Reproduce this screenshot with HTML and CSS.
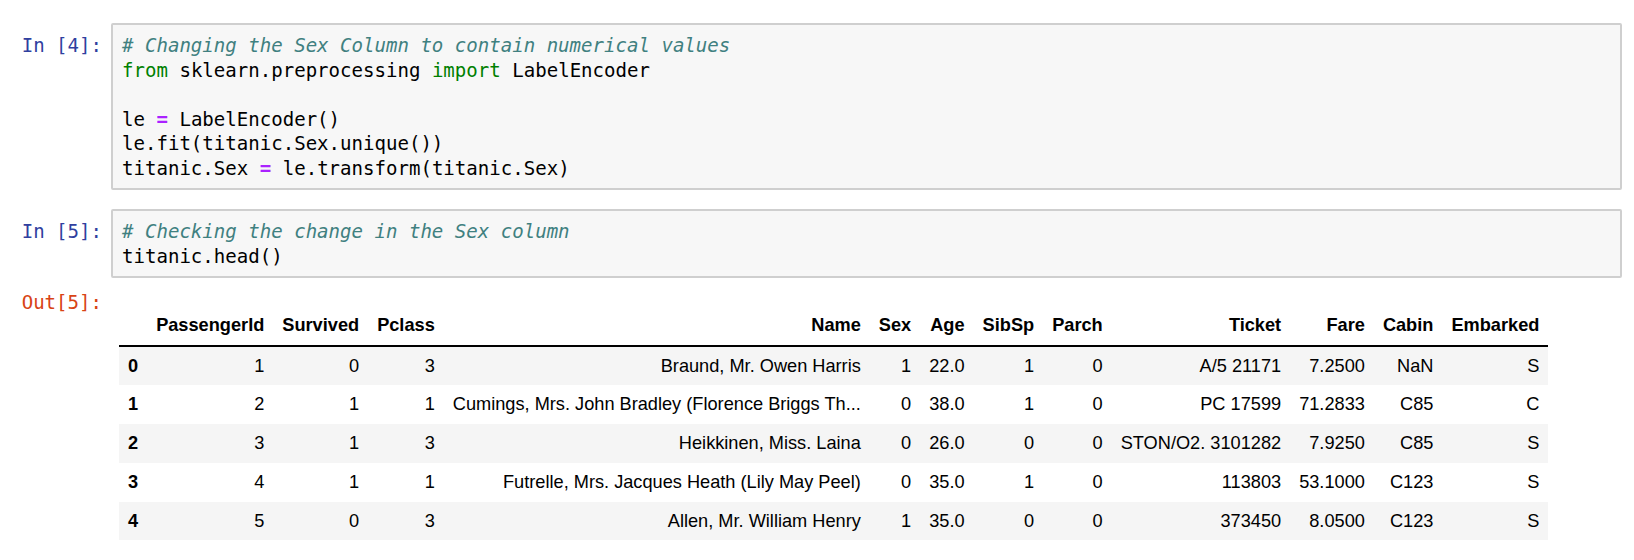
FILE: index.html
```html
<!DOCTYPE html>
<html>
<head>
<meta charset="utf-8">
<link rel="stylesheet" href="styles.css">
</head>
<body>
<div class="notebook">
  <div class="cell">
    <div class="prompt in">In&nbsp;[4]:</div>
    <div class="input-area"><pre class="code"><span class="c"># Changing the Sex Column to contain numerical values</span>
<span class="k">from</span> sklearn.preprocessing <span class="k">import</span> LabelEncoder

le <span class="o">=</span> LabelEncoder()
le.fit(titanic.Sex.unique())
titanic.Sex <span class="o">=</span> le.transform(titanic.Sex)</pre></div>
  </div>
  <div class="cell cell-2">
    <div class="prompt in">In&nbsp;[5]:</div>
    <div class="input-area"><pre class="code"><span class="c"># Checking the change in the Sex column</span>
titanic.head()</pre></div>
  </div>
  <div class="output">
    <div class="prompt out">Out[5]:</div>
    <div class="output-area">
      <table class="dataframe">
        <thead>
          <tr>
            <th></th>
            <th>PassengerId</th>
            <th>Survived</th>
            <th>Pclass</th>
            <th>Name</th>
            <th>Sex</th>
            <th>Age</th>
            <th>SibSp</th>
            <th>Parch</th>
            <th>Ticket</th>
            <th>Fare</th>
            <th>Cabin</th>
            <th>Embarked</th>
          </tr>
        </thead>
        <tbody>
          <tr>
            <th>0</th><td>1</td><td>0</td><td>3</td><td>Braund, Mr. Owen Harris</td><td>1</td><td>22.0</td><td>1</td><td>0</td><td>A/5 21171</td><td>7.2500</td><td>NaN</td><td>S</td>
          </tr>
          <tr>
            <th>1</th><td>2</td><td>1</td><td>1</td><td>Cumings, Mrs. John Bradley (Florence Briggs Th...</td><td>0</td><td>38.0</td><td>1</td><td>0</td><td>PC 17599</td><td>71.2833</td><td>C85</td><td>C</td>
          </tr>
          <tr>
            <th>2</th><td>3</td><td>1</td><td>3</td><td>Heikkinen, Miss. Laina</td><td>0</td><td>26.0</td><td>0</td><td>0</td><td>STON/O2. 3101282</td><td>7.9250</td><td>C85</td><td>S</td>
          </tr>
          <tr>
            <th>3</th><td>4</td><td>1</td><td>1</td><td>Futrelle, Mrs. Jacques Heath (Lily May Peel)</td><td>0</td><td>35.0</td><td>1</td><td>0</td><td>113803</td><td>53.1000</td><td>C123</td><td>S</td>
          </tr>
          <tr>
            <th>4</th><td>5</td><td>0</td><td>3</td><td>Allen, Mr. William Henry</td><td>1</td><td>35.0</td><td>0</td><td>0</td><td>373450</td><td>8.0500</td><td>C123</td><td>S</td>
          </tr>
        </tbody>
      </table>
    </div>
  </div>
</div>
</body>
</html>
```

FILE: styles.css
```css
html, body {
  margin: 0;
  padding: 0;
  background: #ffffff;
}

.notebook {
  padding: 23px 12px 0 0;
  display: flex;
  flex-direction: column;
}

.cell {
  display: flex;
  align-items: flex-start;
}

.cell-2 {
  margin-top: 19px;
}

.prompt {
  width: 111px;
  flex: 0 0 111px;
  box-sizing: border-box;
  padding-right: 9px;
  padding-top: 10px;
  text-align: right;
  font-family: "DejaVu Sans Mono", "Liberation Mono", monospace;
  font-size: 19.07px;
  line-height: 24.5px;
  white-space: nowrap;
}

.prompt.in {
  color: #303F9F;
}

.prompt.out {
  color: #D84315;
  padding-top: 0;
}

.input-area {
  flex: 1;
  min-width: 0;
  background: #f7f7f7;
  border: 2px solid #cfcfcf;
  border-radius: 2px;
  padding: 8px 9px;
}

.code {
  margin: 0;
  font-family: "DejaVu Sans Mono", "Liberation Mono", monospace;
  font-size: 19.07px;
  line-height: 24.5px;
  color: #000000;
  white-space: pre;
}

.c {
  color: #408080;
  font-style: italic;
}

.k {
  color: #008000;
}

.o {
  color: #AA22FF;
  font-weight: bold;
}

.output {
  display: flex;
  align-items: flex-start;
  margin-top: 12px;
}

.output-area {
  padding-left: 8px;
}

.dataframe {
  margin-top: 16px;
  border-collapse: collapse;
  border-spacing: 0;
  font-family: "Liberation Sans", Arial, sans-serif;
  font-size: 18.2px;
  color: #000000;
}

.dataframe th,
.dataframe td {
  padding: 9px;
  text-align: right;
  vertical-align: middle;
  line-height: 20.7px;
  white-space: nowrap;
}

.dataframe thead th {
  font-weight: bold;
  vertical-align: bottom;
  border-bottom: 2px solid #000000;
}

.dataframe tbody th {
  font-weight: bold;
}

.dataframe tbody tr:nth-child(odd) {
  background: #f5f5f5;
}
```
